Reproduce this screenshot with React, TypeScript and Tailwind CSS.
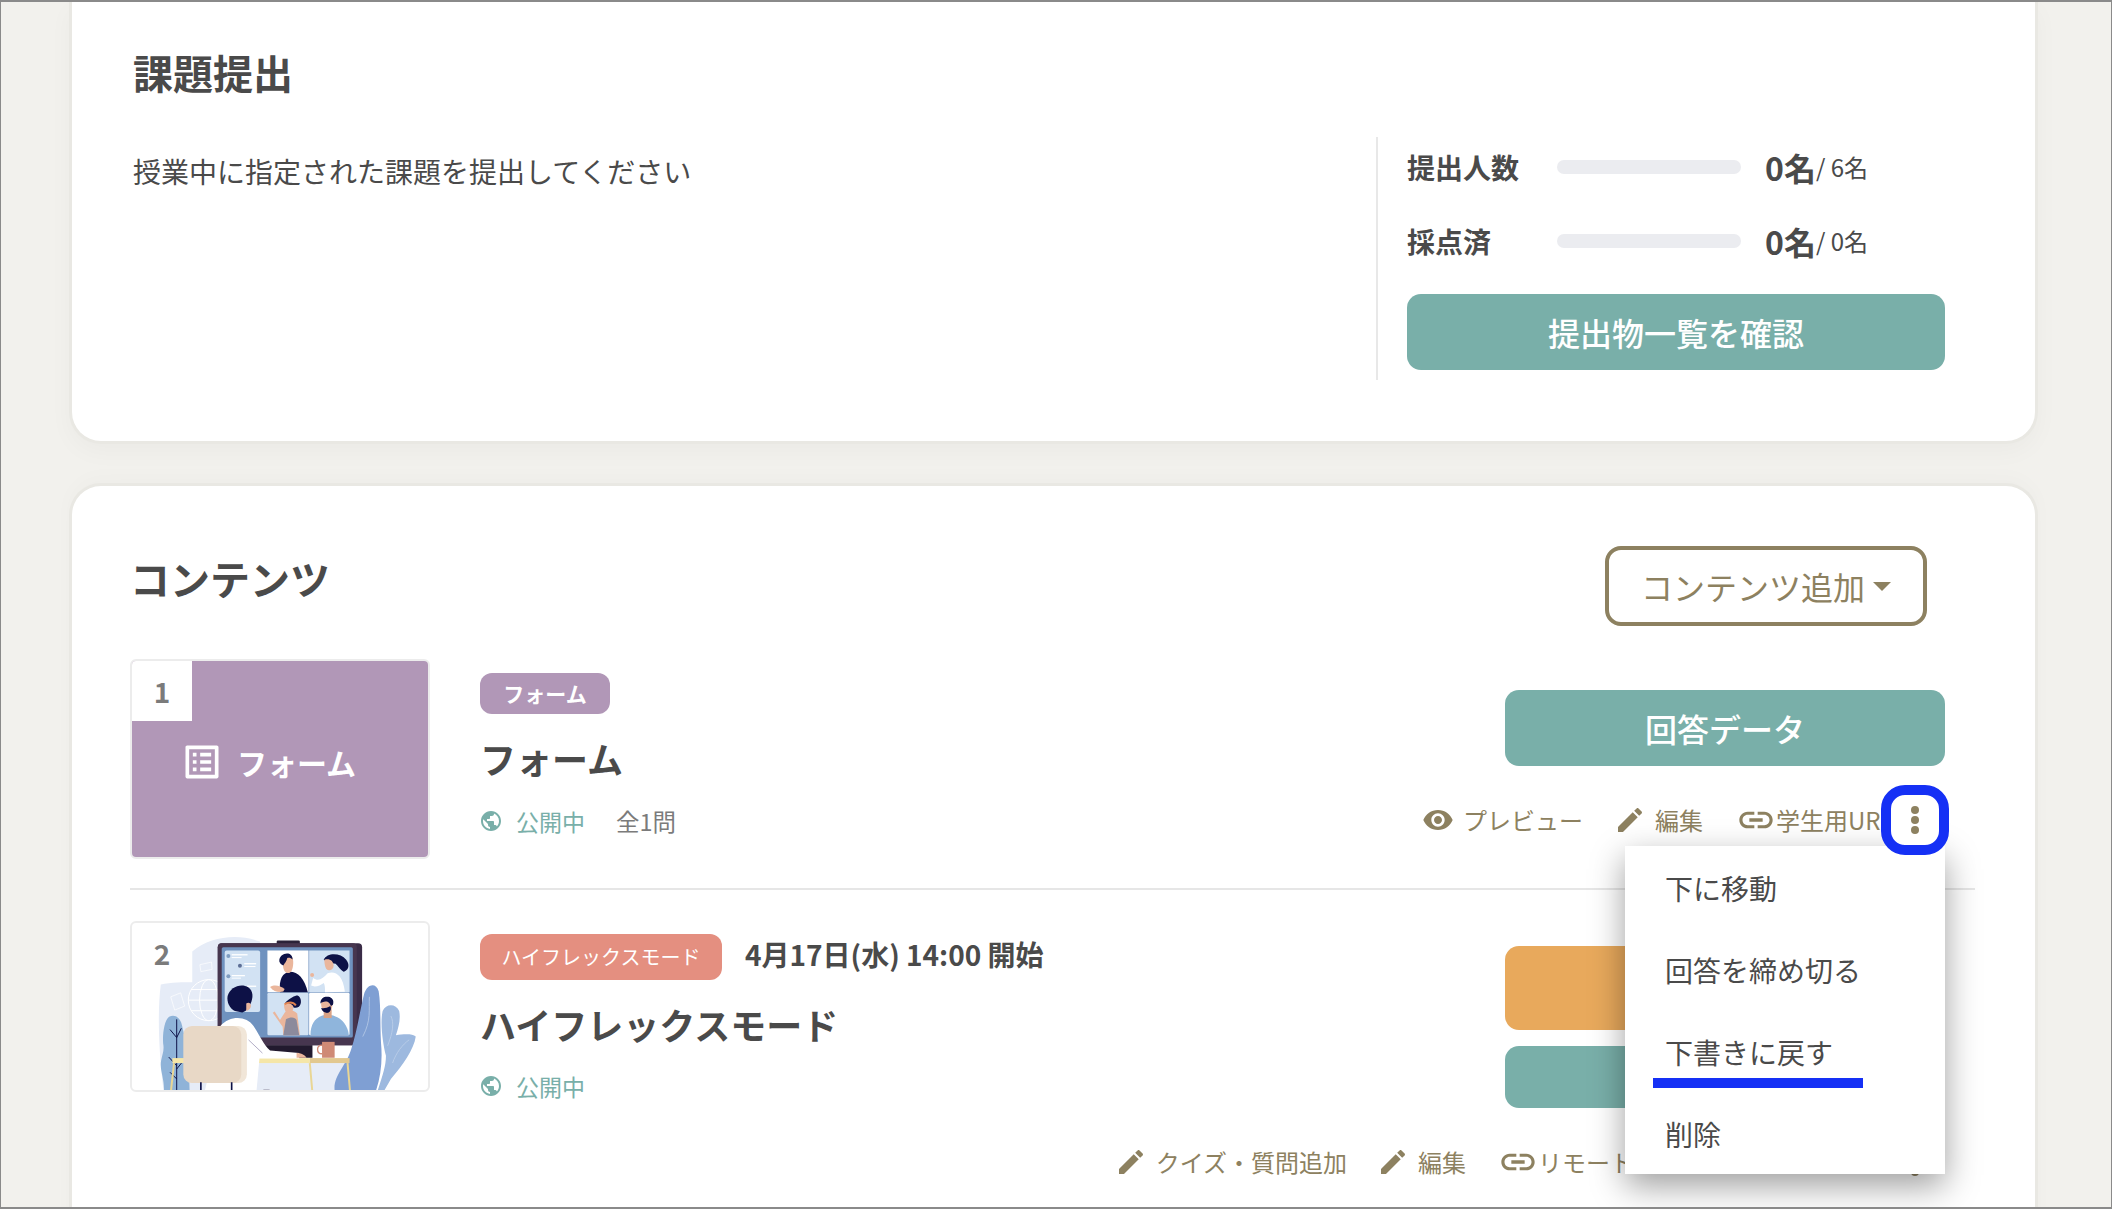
import React from 'react';

const ICONS = {
  eye: 'M12 4.5C7 4.5 2.73 7.61 1 12c1.73 4.39 6 7.5 11 7.5s9.27-3.11 11-7.5c-1.73-4.39-6-7.5-11-7.5zM12 17c-2.76 0-5-2.24-5-5s2.24-5 5-5 5 2.24 5 5-2.24 5-5 5zm0-8c-1.66 0-3 1.34-3 3s1.34 3 3 3 3-1.34 3-3-1.34-3-3-3z',
  edit: 'M3 17.25V21h3.75L17.81 9.94l-3.75-3.75L3 17.25zM20.71 7.04c.39-.39.39-1.02 0-1.41l-2.34-2.34c-.39-.39-1.02-.39-1.41 0l-1.83 1.83 3.75 3.75 1.83-1.83z',
  link: 'M3.9 12c0-1.71 1.39-3.1 3.1-3.1h4V7H7c-2.76 0-5 2.24-5 5s2.24 5 5 5h4v-1.9H7c-1.71 0-3.1-1.39-3.1-3.1zM8 13h8v-2H8v2zm9-6h-4v1.9h4c1.71 0 3.1 1.39 3.1 3.1s-1.39 3.1-3.1 3.1h-4V17h4c2.76 0 5-2.24 5-5s-2.24-5-5-5z',
  list: 'M19 5v14H5V5h14m1.1-2H3.9c-.5 0-.9.4-.9.9v16.2c0 .4.4.9.9.9h16.2c.4 0 .9-.5.9-.9V3.9c0-.5-.5-.9-.9-.9zM11 7h6v2h-6V7zm0 4h6v2h-6v-2zm0 4h6v2h-6zM7 7h2v2H7zm0 4h2v2H7zm0 4h2v2H7z',
  globe: 'M12 2C6.48 2 2 6.48 2 12s4.48 10 10 10 10-4.48 10-10S17.52 2 12 2zm-1 17.93c-3.95-.49-7-3.85-7-7.93 0-.62.08-1.21.21-1.79L9 15v1c0 1.1.9 2 2 2v1.93zm6.9-2.54c-.26-.81-1-1.39-1.9-1.39h-1v-3c0-.55-.45-1-1-1H8v-2h2c.55 0 1-.45 1-1V7h2c1.1 0 2-.9 2-2v-.41c2.93 1.19 5 4.06 5 7.41 0 2.08-.8 3.97-2.1 5.39z',
};

function Icon({ name, className }: { name: keyof typeof ICONS; className: string }) {
  return (
    <svg viewBox="0 0 24 24" fill="currentColor" className={className}>
      <path d={ICONS[name]} />
    </svg>
  );
}

function Kebab({ ring }: { ring?: boolean }) {
  return (
    <div
      className={`-mr-[4px] flex h-[70px] w-[68px] shrink-0 flex-col items-center justify-center gap-[2px] rounded-[24px] border-[10px] ${
        ring ? 'relative z-20 border-[#1530f5] bg-white' : 'border-transparent'
      }`}
    >
      <span className="h-[8px] w-[8px] rounded-full bg-[#8d8160]" />
      <span className="h-[8px] w-[8px] rounded-full bg-[#8d8160]" />
      <span className="h-[8px] w-[8px] rounded-full bg-[#8d8160]" />
    </div>
  );
}

function Status() {
  return (
    <div className="flex items-center text-[23px] leading-[36px]">
      <Icon name="globe" className="-ml-[1px] h-[24px] w-[24px] text-[#79afa9]" />
      <span className="ml-[13px] text-[#79afa9]">公開中</span>
    </div>
  );
}

function Illustration() {
  return (
    <svg viewBox="33 39 894 507" className="h-full w-full" preserveAspectRatio="xMidYMin slice">
      <path d="M215 125C270 80 350 70 420 95L420 460 690 460 690 560 130 560C112 420 110 300 120 225 150 218 190 218 215 218Z" fill="#e6ecf7" />
      <g fill="none" stroke="#fff" strokeWidth="3">
        <circle cx="265" cy="272" r="62" />
        <ellipse cx="265" cy="272" rx="28" ry="62" />
        <path d="M203 272h124M212 240h106M212 304h106" />
        <path d="M238 165l35-8 2 22-34 7zM150 262l30-12 12 40-30 12z" strokeWidth="2" />
      </g>
      <path d="M470 96q0-4 4-4h62q4 0 4 4v8h-70z" fill="#2b2238" />
      <rect x="292" y="100" width="436" height="308" rx="12" fill="#3a2c47" />
      <rect x="292" y="100" width="420" height="308" rx="12" fill="#47364f" />
      <rect x="304" y="112" width="396" height="273" rx="5" fill="#6f92bf" />
      <rect x="313" y="122" width="107" height="186" rx="6" fill="#d2e2f3" />
      <g fill="#fff">
        <rect x="334" y="133" width="48" height="4" />
        <rect x="334" y="142" width="30" height="3" />
        <rect x="372" y="160" width="36" height="4" />
        <rect x="372" y="169" width="34" height="3" />
        <rect x="334" y="196" width="40" height="4" />
        <rect x="334" y="204" width="28" height="3" />
        <rect x="380" y="228" width="28" height="4" />
      </g>
      <circle cx="324" cy="139" r="6" fill="#7f9cc0" />
      <circle cx="359" cy="168" r="6" fill="#5d6f96" />
      <circle cx="324" cy="200" r="6" fill="#7f9cc0" />
      <rect x="442" y="122" width="124" height="126" fill="#fff" />
      <rect x="568" y="122" width="122" height="126" fill="#d2e2f3" />
      <rect x="442" y="250" width="124" height="128" rx="4" fill="#d2e2f3" />
      <rect x="568" y="250" width="122" height="128" rx="4" fill="#fff" />
      {/* tile 1 */}
      <path d="M480 248c-4-40 8-60 30-62 24 0 44 20 54 62z" fill="#0d1146" />
      <path d="M488 150c6-20 34-22 32 10-1 24-8 32-18 30-10-2-14-14-14-40z" fill="#eab69c" />
      <path d="M478 155c-2-26 40-34 40-6-6-6-12-6-16-4-2 10-8 16-12 22-6-2-10-6-12-12z" fill="#0d1146" />
      <path d="M450 232c14-8 30-4 44 6l-4 8c-12 4-30 0-40-14z" fill="#eab69c" />
      {/* tile 2 */}
      <path d="M612 150c10-22 50-22 68 0 14 18 4 34-8 36-10-6-16-16-24-24-14-2-26-4-36-12z" fill="#0d1146" />
      <path d="M614 150c16-4 26 2 28 18 0 12-14 18-22 10-4-6-6-18-6-28z" fill="#eab69c" />
      <path d="M580 205c16 12 30 2 44-14 22-8 46 4 52 56l-60 1c0-12 0-22-4-28-10 8-26 14-38 8z" fill="#fff" />
      <circle cx="577" cy="196" r="6" fill="#eab69c" />
      {/* tile 3 */}
      <path d="M458 310l30 42 2 26h50l-8-66c-14-12-30-12-38-2l-14 22-16-26z" fill="#eab69c" />
      <path d="M490 378l8-48c12-8 28-8 32 2l8 46z" fill="#8c8a9c" />
      <path d="M492 284c10-8 24-8 28 6 2 14-6 24-16 22-8-2-12-14-12-28z" fill="#eab69c" />
      <path d="M495 280c14-14 30-22 38-22 12 4 14 26 4 34-6 4-12 4-16 2-2-10-14-14-26-14z" fill="#0d1146" />
      <path d="M494 284c12-6 24-8 34 4" stroke="#e0824f" strokeWidth="6" fill="none" />
      {/* tile 4 */}
      <path d="M572 378c0-40 20-60 50-62 34 0 62 24 66 62z" fill="#8fb5dc" />
      <rect x="612" y="300" width="24" height="26" fill="#d9a285" />
      <path d="M604 280c8-12 30-12 34 2 1 14-4 28-16 28-12 0-18-14-18-30z" fill="#eab69c" />
      <path d="M602 282c0-18 14-22 24-20 12 2 18 12 14 24l-6 4c-2-6-6-12-12-14-8 0-16 2-20 6z" fill="#0d1146" />
      <path d="M604 296c8 2 18 0 28-6 4 8 2 16-6 20-8 2-18-2-22-14z" fill="#0d1146" />
      {/* plants */}
      <path d="M775 545C790 500 800 470 800 440 790 400 782 340 790 305 800 282 830 282 840 305 845 330 838 355 830 378 850 375 880 372 890 382 885 420 850 470 815 510L795 545Z" fill="#9db9df" />
      <path d="M645 545C640 500 680 470 695 420 712 370 722 300 735 250 745 222 770 218 778 245 785 290 782 340 785 400 790 450 785 500 770 545Z" fill="#7f9fd3" />
      <path d="M750 262c-2 40 6 70-20 120M815 320c10 20 6 50-10 90M870 392c-20 14-40 40-50 70" fill="none" stroke="#c4d4ec" strokeWidth="2" />
      <path d="M145 322c20-10 36 6 40 30 6 30 22 70 22 200h-78c4-40-14-70-8-98 4-20 10-30 6-52-2-30 4-70 18-80z" fill="#8fb3d8" />
      <path d="M168 330v220M168 385l-20-24M168 385l14-28M168 470l-24-26M168 480l24-30M168 510l-20-20" fill="none" stroke="#0d1146" strokeWidth="3" />
      {/* desk */}
      <rect x="155" y="447" width="415" height="15" fill="#f5e6a8" />
      <rect x="570" y="447" width="120" height="15" fill="#e2c88f" />
      <path d="M160 462l-10 90M570 462l8 90M684 462l8 90" stroke="#e9d694" strokeWidth="6" fill="none" />
      {/* desk stand, mug */}
      <rect x="422" y="408" width="156" height="38" fill="#221a2e" />
      <rect x="607" y="398" width="38" height="48" fill="#cf8a76" />
      <path d="M607 408c-18 0-18 26 0 26" fill="none" stroke="#cf8a76" strokeWidth="4" />
      {/* seated person */}
      <path d="M300 350c30-34 80-30 100 0 20 30 30 56 50 74l88 8 0 16-120 0-10 110H250z" fill="#fff" />
      <path d="M530 432c10 0 24 4 30 14h-30z" fill="#eab69c" />
      <path d="M385 392l42 40" stroke="#8a83a8" strokeWidth="2" fill="none" />
      <path d="M392 570c10-30 60-40 100-8z" fill="#3a2c47" />
      <path d="M344 305c-16-6-26-28-22-46 6-26 40-40 62-26 16 12 14 30 10 42-6 16-14 30-28 34z" fill="#0d1146" />
      <path d="M378 282c8-6 16 0 14 10-2 6-8 12-14 12z" fill="#eab69c" />
      <rect x="210" y="350" width="170" height="172" rx="26" fill="#f1e6d8" />
      <rect x="188" y="350" width="175" height="172" rx="26" fill="#e8d8c6" />
      <path d="M241 520v30M334 520v30" stroke="#0d1146" strokeWidth="5" />
    </svg>
  );
}

function Thumb({ n, children }: { n: number; children: React.ReactNode }) {
  return (
    <div className="relative h-full w-[300px] shrink-0 overflow-hidden rounded-[6px] border-2 border-[#ececec] bg-white">
      {children}
      <div className="absolute left-0 top-0 flex h-[60px] w-[60px] items-center justify-center text-[28px] font-bold text-[#7b7b7b]">
        {n}
      </div>
    </div>
  );
}

function Action({ icon, label }: { icon: 'eye' | 'edit'; label: string }) {
  return (
    <div className="flex shrink-0 items-center gap-[9px]">
      <Icon name={icon} className="h-[32px] w-[32px] shrink-0" />
      <span>{label}</span>
    </div>
  );
}

export default function App() {
  return (
    <div className="relative flex h-[1209px] w-[2112px] flex-col overflow-hidden border border-y-2 border-[#8a8a8a] bg-[#f2f1ed] font-['Noto_Sans_CJK_JP','Noto_Sans',sans-serif] text-[#4a4a4a]">
      <section className="ml-[68px] mr-[73px] flex h-[442px] shrink-0 rounded-b-[32px] border-x-[3px] border-b-[3px] border-[#e9e8e3] bg-white shadow-[0_8px_24px_rgba(0,0,0,0.03)]">
        <div className="flex-1 pl-[61px] pt-[44px]">
          <h1 className="text-[40px] font-bold leading-[52px]">課題提出</h1>
          <p className="mt-[53px] text-[28px] leading-[40px]">授業中に指定された課題を提出してください</p>
        </div>
        <aside className="mr-[88px] mt-[135px] h-[243px] w-[571px] shrink-0 border-l-2 border-[#e8e8e8] pl-[29px] pt-[10px]">
          <div className="flex h-[40px] items-center">
            <span className="w-[150px] text-[28px] font-bold">提出人数</span>
            <span className="h-[14px] w-[184px] rounded-full bg-[#ebecf0]" />
            <span className="ml-[24px] text-[32px] font-bold">0名</span>
            <span className="text-[24px]">/ 6名</span>
          </div>
          <div className="mt-[34px] flex h-[40px] items-center">
            <span className="w-[150px] text-[28px] font-bold">採点済</span>
            <span className="h-[14px] w-[184px] rounded-full bg-[#ebecf0]" />
            <span className="ml-[24px] text-[32px] font-bold">0名</span>
            <span className="text-[24px]">/ 0名</span>
          </div>
          <button className="mt-[33px] h-[76px] w-[538px] rounded-[14px] bg-[#79afa9] text-[32px] font-medium text-white">提出物一覧を確認</button>
        </aside>
      </section>

      <section className="ml-[68px] mr-[73px] mt-[39px] h-[800px] shrink-0 rounded-t-[32px] border-x-[3px] border-t-[3px] border-[#e9e8e3] bg-white pl-[58px] pr-[60px] shadow-[0_-6px_20px_rgba(0,0,0,0.02)]">
        <div className="flex items-start justify-between pt-[60px]">
          <h2 className="mt-[6px] text-[40px] font-bold leading-[52px]">コンテンツ</h2>
          <button className="mr-[48px] flex h-[80px] w-[322px] items-center rounded-[16px] border-4 border-[#8d8160] pl-[32px] text-[32px] text-[#8d8160]">
            コンテンツ追加
            <span className="ml-[8px] h-0 w-0 border-x-[9px] border-t-[9px] border-x-transparent border-t-[#8d8160]" />
          </button>
        </div>

        {/* form row */}
        <div className="mt-[33px] flex h-[231px] border-b-2 border-[#e6e6e6]">
          <div className="h-[200px]">
            <Thumb n={1}>
              <div className="flex h-full items-center bg-[#b197b7] pl-[48px] pt-[6px] text-white">
                <Icon name="list" className="h-[44px] w-[44px]" />
                <span className="ml-[13px] text-[30px] font-bold">フォーム</span>
              </div>
              <div className="absolute left-0 top-0 h-[60px] w-[60px] bg-white" />
            </Thumb>
          </div>
          <div className="ml-[50px] flex-1 pt-[14px]">
            <span className="inline-flex h-[41px] w-[130px] items-center justify-center rounded-[12px] bg-[#b197b7] text-[21px] font-bold text-white">フォーム</span>
            <div className="mt-[18px] text-[36px] font-bold leading-[52px]">フォーム</div>
            <div className="mt-[19px] flex items-center">
              <Status />
              <span className="ml-[31px] text-[23.5px] leading-[36px] text-[#7b7b7b]">全1問</span>
            </div>
          </div>
          <div className="relative w-[470px] shrink-0 pr-[30px] pt-[31px]">
            <button className="h-[76px] w-[440px] rounded-[14px] bg-[#79afa9] text-[32px] font-medium text-white">回答データ</button>
            <div className="mt-[19px] flex items-center justify-end whitespace-nowrap text-[24px] text-[#8d8160]">
              <Action icon="eye" label="プレビュー" />
              <div className="ml-[31px] shrink-0"><Action icon="edit" label="編集" /></div>
              <Icon name="link" className="ml-[33px] h-[40px] w-[40px] shrink-0" />
              <span className="w-[105px] shrink-0 overflow-hidden">学生用URL</span>
              <Kebab ring />
            </div>
            <div className="absolute right-[30px] top-[187px] z-10 h-[328px] w-[320px] bg-white pt-[1px] text-[28px] shadow-[0_12px_32px_rgba(0,0,0,0.38)]">
              <div className="flex h-[82px] items-center pl-[40px]">下に移動</div>
              <div className="flex h-[82px] items-center pl-[40px]">回答を締め切る</div>
              <div className="relative flex h-[82px] items-center pl-[40px]">
                下書きに戻す
                <span className="absolute bottom-[5px] left-[28px] h-[10px] w-[210px] bg-[#1530f5]" />
              </div>
              <div className="flex h-[82px] items-center pl-[40px]">削除</div>
            </div>
          </div>
        </div>

        {/* hyflex row */}
        <div className="flex pt-[31px]">
          <div className="h-[171px]">
            <Thumb n={2}>
              <Illustration />
            </Thumb>
          </div>
          <div className="ml-[50px] flex-1 pt-[13px]">
            <div className="flex items-center">
              <span className="inline-flex h-[46px] w-[242px] items-center justify-center rounded-[12px] bg-[#e48f80] text-[20px] text-white">ハイフレックスモード</span>
              <span className="-mt-[6px] ml-[23px] text-[28px] font-bold">4月17日(水) 14:00 開始</span>
            </div>
            <div className="mt-[18px] text-[36px] font-bold leading-[52px]">ハイフレックスモード</div>
            <div className="mt-[18px]"><Status /></div>
          </div>
          <div className="w-[470px] shrink-0 pr-[30px] pt-[25px]">
            <div className="h-[84px] w-[440px] rounded-[14px] bg-[#e8a95c]" />
            <div className="mt-[16px] h-[62px] w-[440px] rounded-[14px] bg-[#79afa9]" />
            <div className="mt-[19px] flex items-center justify-end whitespace-nowrap text-[24px] text-[#8d8160]">
              <Action icon="edit" label="クイズ・質問追加" />
              <div className="ml-[30px] shrink-0"><Action icon="edit" label="編集" /></div>
              <Icon name="link" className="ml-[32px] h-[40px] w-[40px] shrink-0" />
              <span className="w-[343px] shrink-0 overflow-hidden">リモート</span>
              <Kebab />
            </div>
          </div>
        </div>
      </section>
    </div>
  );
}
